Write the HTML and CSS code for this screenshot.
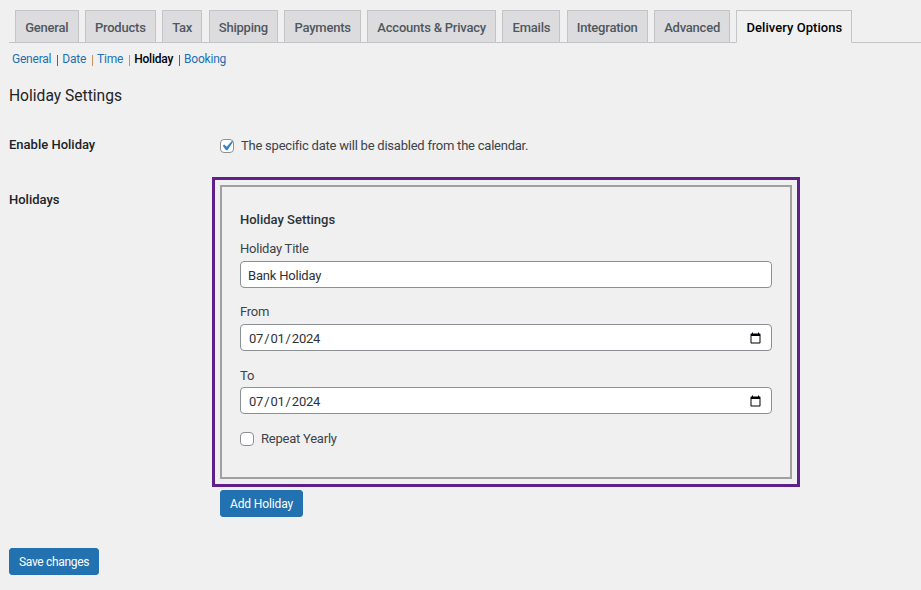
FILE: index.html
```html
<!DOCTYPE html>
<html lang="en">
<head>
    <meta charset="UTF-8">
    <meta name="viewport" content="width=device-width, initial-scale=1.0">
    <title>Holiday Settings</title>
    <link rel="stylesheet" href="styles.css">
</head>
<body>
    <div class="wrap">
        <!-- main tabs -->
        <nav class="nav-tabs">
            <a class="nav-tab">General</a>
            <a class="nav-tab">Products</a>
            <a class="nav-tab">Tax</a>
            <a class="nav-tab">Shipping</a>
            <a class="nav-tab">Payments</a>
            <a class="nav-tab">Accounts &amp; Privacy</a>
            <a class="nav-tab">Emails</a>
            <a class="nav-tab">Integration</a>
            <a class="nav-tab">Advanced</a>
            <a class="nav-tab nav-tab-active">Delivery Options</a>
        </nav>

        <!-- sub tabs -->
        <ul class="subsubsub">
            <li><a>General</a><span class="sep sep-blue"></span></li>
            <li><a>Date</a><span class="sep"></span></li>
            <li><a>Time</a><span class="sep"></span></li>
            <li><a class="current">Holiday</a><span class="sep sep-blue"></span></li>
            <li><a>Booking</a></li>
        </ul>

        <h2 class="section-title">Holiday Settings</h2>

        <div class="form-row row-enable">
            <div class="row-label">Enable Holiday</div>
            <label class="check-label">
                <input type="checkbox" class="check" checked>
                The specific date will be disabled from the calendar.
            </label>
        </div>

        <div class="form-row row-holidays">
            <div class="row-label">Holidays</div>
            <div class="row-field">
                <div class="highlight">
                    <div class="holiday-box">
                        <h4 class="box-title">Holiday Settings</h4>
                        <div class="field field-title">
                            <label>Holiday Title</label>
                            <input type="text" class="input" value="Bank Holiday">
                        </div>
                        <div class="field">
                            <label>From</label>
                            <input type="date" class="input" value="2024-07-01">
                        </div>
                        <div class="field field-to">
                            <label>To</label>
                            <input type="date" class="input" value="2024-07-01">
                        </div>
                        <label class="check-label repeat">
                            <input type="checkbox" class="check">
                            Repeat Yearly
                        </label>
                    </div>
                </div>
                <button class="button add-btn">Add Holiday</button>
            </div>
        </div>

        <button class="button save-btn">Save changes</button>
    </div>
</body>
</html>
```

FILE: styles.css
```css
* {
    margin: 0;
    padding: 0;
    box-sizing: border-box;
}

body {
    background-color: #f0f0f1;
    color: #3c434a;
    font-family: 'Roboto', sans-serif;
    font-size: 13px;
    letter-spacing: -0.23px;
    overflow: hidden;
}

.wrap {
    padding: 10px 0 0 9px;
}

/* tabs */
.nav-tabs {
    display: flex;
    gap: 6.2px;
    height: 33px;
    padding-left: 6px;
    border-bottom: 1px solid #c3c4c7;
}

.nav-tab {
    height: 33px;
    padding: 0 9.2px;
    line-height: 33px;
    font-size: 13px;
    font-weight: 500;
    letter-spacing: -0.22px;
    white-space: nowrap;
    color: #50575e;
    background: #dcdcde;
    border: 1px solid #c3c4c7;
}

.nav-tab-active {
    color: #000;
    background: #f0f0f1;
    border-bottom-color: #f0f0f1;
    letter-spacing: 0.05px;
}

/* sub tabs */
.subsubsub {
    display: flex;
    list-style: none;
    padding: 7px 0 0 3px;
    font-size: 12px;
    line-height: 18px;
    letter-spacing: -0.22px;
}

.subsubsub li {
    display: flex;
    align-items: center;
}

.subsubsub a {
    color: #2271b1;
}

.subsubsub a.current {
    color: #000;
    font-weight: 500;
}

.sep {
    width: 1px;
    height: 11px;
    margin: 2px 4px 0 6px;
    background: #c8965a;
}

.sep-blue {
    background: #2271b1;
}

.section-title {
    margin-top: 18px;
    font-size: 15.6px;
    font-weight: 400;
    line-height: 20px;
    letter-spacing: 0;
    color: #1d2327;
}

/* form rows */
.form-row {
    display: flex;
}

.row-label {
    width: 211px;
    font-weight: 500;
    letter-spacing: 0;
    color: #1d2327;
    line-height: 20px;
}

.row-enable {
    margin-top: 30px;
}

.row-enable .row-label {
    margin-top: -1px;
}

.row-holidays {
    margin-top: 21px;
}

.row-holidays .row-label {
    margin-top: 13px;
}

.row-field {
    margin-left: -8px;
}

.check-label {
    display: flex;
    align-items: center;
    gap: 7px;
    line-height: 20px;
}

.check {
    appearance: none;
    width: 14px;
    height: 14px;
    background: #fff;
    border: 1px solid #8c8f94;
    border-radius: 4px;
    flex: none;
}

.check:checked {
    background: #fff url("data:image/svg+xml;utf8,<svg xmlns='http://www.w3.org/2000/svg' viewBox='0 0 20 20'><path d='M14.83 4.89l1.34.94-5.81 8.38H9.02L5.78 9.67l1.34-1.25 2.57 2.4z' fill='%233582c4'/></svg>") center / 20px no-repeat;
}

/* holiday box */
.highlight {
    width: 588px;
    height: 310px;
    padding: 5px;
    border: 3px solid #5f2189;
}

.holiday-box {
    height: 100%;
    padding: 24px 18px 0 18px;
    border: 2px solid #a0a0a0;
}

.box-title {
    font-size: 13px;
    font-weight: 500;
    line-height: 18px;
    letter-spacing: 0;
    color: #2c3338;
}

.field {
    margin-top: 15px;
}

.field label {
    display: block;
    line-height: 18px;
    margin-bottom: 3px;
}

.field-title {
    margin-top: 11px;
}

.field-to {
    margin-top: 16px;
}

.field-to label {
    margin-bottom: 2px;
}

.input {
    display: block;
    width: 100%;
    height: 27px;
    padding: 2px 7px 0;
    background: #fff;
    border: 1px solid #8c8f94;
    border-radius: 4px;
    color: #2c3338;
    font-family: inherit;
    font-size: 13px;
    letter-spacing: -0.2px;
}

.repeat {
    margin-top: 15px;
}

/* buttons */
.button {
    display: block;
    height: 27px;
    padding: 2px 9px 0;
    background: #2271b1;
    border: 1px solid #2271b1;
    border-radius: 3px;
    color: #fff;
    font-family: inherit;
    font-size: 12px;
    line-height: 23px;
}

.add-btn {
    margin: 3px 0 0 8px;
    letter-spacing: -0.12px;
}

.save-btn {
    margin-top: 31px;
    letter-spacing: -0.32px;
}
```
